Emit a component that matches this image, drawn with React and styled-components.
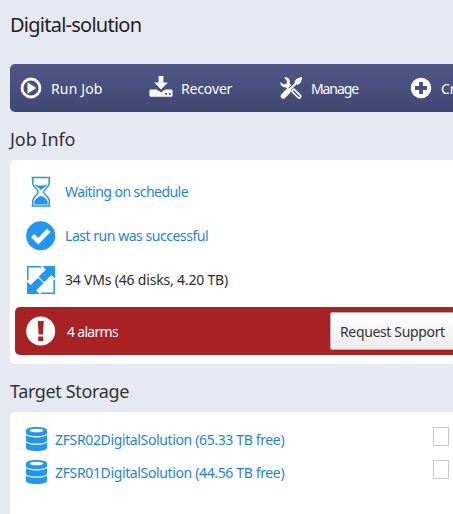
import React from 'react';
import styled, { createGlobalStyle } from 'styled-components';

const GlobalStyle = createGlobalStyle`
  *, *::before, *::after { box-sizing: border-box; }
  html, body { margin: 0; overflow: hidden; background: #e6e9f2; }
  body { font: 14px/20px "Noto Sans", "Open Sans", sans-serif; color: #2b2b2b; }
`;

const Page = styled.main`
  height: 514px;
  padding-left: 10px;
  overflow: hidden;
  display: flex;
  flex-direction: column;
`;

const Text = styled.span`
  letter-spacing: ${(p) => p.$track || 0}px;
  white-space: nowrap;
`;

const Title = styled.h1`
  margin: 0;
  height: 64px;
  padding-top: 10px;
  font-size: 20px;
  line-height: 30px;
  font-weight: 400;
  color: #222;
  flex: none;
`;

const SectionTitle = styled.h2`
  margin: 0;
  height: 48px;
  padding-top: 14px;
  font-size: 18px;
  line-height: 26px;
  font-weight: 400;
  color: #333;
  flex: none;
`;

const Toolbar = styled.nav`
  flex: none;
  height: 48px;
  display: grid;
  grid-template-columns: repeat(4, 130px);
  border-radius: 5px 0 0 5px;
  background: linear-gradient(#505788, #404874);
  color: #fff;
`;

const Tool = styled.a`
  display: grid;
  grid-template-columns: 24px 1fr;
  column-gap: 8px;
  align-items: center;
  padding: 1px 0 0 9px;

  svg { margin-top: -2px; }
`;

const Panel = styled.section`
  flex: none;
  height: ${(p) => p.$height}px;
  padding: ${(p) => p.$padding};
  border-radius: 5px 0 0 5px;
  background: #fff;
`;

const InfoRow = styled.div`
  height: 44px;
  display: grid;
  grid-template-columns: 30px 1fr;
  column-gap: 9px;
  align-items: center;
  padding-left: 11px;
  color: ${(p) => (p.$link ? '#1a84dc' : '#2b2b2b')};
`;

const AlarmBar = styled.div`
  height: 48px;
  margin-top: 5px;
  display: grid;
  grid-template-columns: 30px 252px 130px;
  column-gap: 11px;
  align-items: center;
  padding-left: 11px;
  border-radius: 5px 0 0 5px;
  background: #a82224;
  color: #fff;
`;

const AlarmLabel = styled.div`
  padding-top: 2px;
`;

const SupportButton = styled.button`
  height: 38px;
  padding: 2px 0 0 9px;
  border: 1px solid #b5b5b5;
  border-radius: 2px;
  background: linear-gradient(#fff, #ececec);
  color: #333;
  font: inherit;
  text-align: left;
`;

const StorageRow = styled.div`
  height: 33px;
  display: grid;
  grid-template-columns: 21px 370px 16px;
  column-gap: 8px;
  align-items: start;
  color: #1a84dc;

  svg { display: block; }
`;

const StorageName = styled.a`
  padding-top: 3px;
`;

const Checkbox = styled.span`
  height: 19px;
  border: 1px solid #c8c8c8;
  background: #fff;
`;

const Svg = styled.svg`
  display: block;
  overflow: visible;
`;

const PlayIcon = () => (
  <Svg width="24" height="24" viewBox="0 0 24 24">
    <circle cx="12" cy="12" r="9" fill="none" stroke="#fff" strokeWidth="2.8" />
    <path d="M8.5 6.3 17.300 12l-8.800 5.700z" fill="#fff" />
  </Svg>
);

const RecoverIcon = () => (
  <Svg width="24" height="24" viewBox="0 0 24 24">
    <path fill="#fff" d="M9.6 0h4.8v6.6h4.4L12 13.4 5.2 6.6h4.4z" />
    <path
      fill="#fff"
      fillRule="evenodd"
      d="M1.8 13.5h6l4.2 3 4.2-3h6q1.3 0 1.3 1.3v4.700q0 1.3-1.3 1.3H1.8q-1.3 0-1.3-1.3v-4.700q0-1.3 1.3-1.3zM16.3 17v1.8h1.8V17zm3.6 0v1.8h1.8V17z"
    />
  </Svg>
);

const ToolsIcon = () => (
  <Svg width="24" height="24" viewBox="0 0 24 24">
    <path d="m10 10.5 10.3 10" stroke="#fff" strokeWidth="4.6" strokeLinecap="round" />
    <path d="m14.5 15 5.7 5.5" stroke="#484f7d" strokeWidth="1.4" strokeLinecap="round" />
    <path
      fill="#fff"
      d="M5.3 1.4c3-.6 5.700 1.5 5.5 4.6l-.2 1.5 3 3-3.800 3.700-3-3C3.6 11.7 1 9.2 1.5 6l3.2 2.5 2.8-.8.4-3z"
    />
    <path d="m9.2 14.8 10-10" stroke="#484f7d" strokeWidth="4" />
    <path d="m8.8 15.5 9-9" stroke="#fff" strokeWidth="2.3" />
    <path fill="#fff" d="m15.300 6 2-3 5-1.900 1 1-2 5-3 2z" />
    <path d="m4.2 20.1 5-5" stroke="#fff" strokeWidth="5.200" strokeLinecap="round" />
  </Svg>
);

const PlusIcon = () => (
  <Svg width="24" height="24" viewBox="0 0 24 24">
    <circle cx="12" cy="12" r="10.3" fill="#fff" />
    <path d="M12 6v12M6 12h12" stroke="#484f7d" strokeWidth="3.8" />
  </Svg>
);

const HourglassIcon = () => (
  <Svg width="30" height="32" viewBox="0 0 30 32">
    <path
      d="M5.500 1.500h19M5.500 30h19M6.800 2v5.500c0 3.800 5.500 5.800 5.500 8.500s-5.500 4.700-5.500 8.500V30M23.200 2v5.500c0 3.800-5.500 5.800-5.500 8.500s5.500 4.700 5.500 8.500V30"
      fill="none"
      stroke="#2196f3"
      strokeWidth="1.500"
    />
    <path
      fill="#2196f3"
      d="M8.500 8c3 2 9.500 2 13 0-.8 2.500-5 4-6.500 6.500C13.500 12 9.300 10.500 8.500 8zM8.300 28.500v-3C9.500 22.200 12 21 15 20c3 1 5.500 2.200 6.700 5.500v3z"
    />
  </Svg>
);

const CheckIcon = () => (
  <Svg width="30" height="30" viewBox="0 0 30 30">
    <circle cx="14.700" cy="14.700" r="14.500" fill="#2196f3" />
    <path d="m6.600 14.500 5.600 5.700L22.800 9.400" fill="none" stroke="#fff" strokeWidth="4.600" />
  </Svg>
);

const ExpandIcon = () => (
  <Svg width="30" height="30" viewBox="0 0 30 30">
    <path
      d="M15 1.800H1.800V15M15 28.200h13.200V15"
      fill="none"
      stroke="#2196f3"
      strokeWidth="1.500"
    />
    <path
      fill="#2196f3"
      d="M16.500 1H29v12.500l-3.600-3.600-7.300 7.300-5.500-5.500 7.300-7.300zM13.500 29H1V16.500l3.600 3.600 7.300-7.300 5.500 5.500-7.300 7.300z"
    />
  </Svg>
);

const AlarmIcon = () => (
  <Svg width="30" height="30" viewBox="0 0 30 30">
    <circle cx="14.700" cy="15" r="14.500" fill="#fff" />
    <path fill="#a82224" d="M11.800 5h6l-.8 13.500h-4.400zM12.200 20.500h5V25h-5z" />
  </Svg>
);

const DatabaseIcon = () => (
  <Svg width="21" height="24" viewBox="0 0 21 24">
    <path fill="#2196f3" d="M0 3.300C0 1.200 4.500 0 10.500 0S21 1.200 21 3.300v17.400c0 2-4.500 3.300-10.500 3.300S0 22.700 0 20.700z" />
    <ellipse cx="10.500" cy="3.500" rx="6.800" ry="1.700" fill="#fff" />
    <path
      d="M-.5 6.900c2 2.300 6 2.900 11 2.900s9-.6 11-2.900M-.5 14.300c2 2.300 6 2.900 11 2.900s9-.6 11-2.900"
      fill="none"
      stroke="#fff"
      strokeWidth="1.200"
    />
  </Svg>
);

const tools = [
  { label: 'Run Job', Icon: PlayIcon, track: 0.15 },
  { label: 'Recover', Icon: RecoverIcon, track: -0.15 },
  { label: 'Manage', Icon: ToolsIcon, track: -1.1 },
  { label: 'Create', Icon: PlusIcon, track: -0.1 },
];

const details = [
  { label: 'Waiting on schedule', Icon: HourglassIcon, track: -0.54, link: true },
  { label: 'Last run was successful', Icon: CheckIcon, track: -0.46, link: true },
  { label: '34 VMs (46 disks, 4.20 TB)', Icon: ExpandIcon, track: -0.19 },
];

const storages = ['ZFSR02DigitalSolution (65.33 TB free)', 'ZFSR01DigitalSolution (44.56 TB free)'];

export default function App() {
  return (
    <>
      <GlobalStyle />
      <Page>
        <Title><Text $track={-0.75}>Digital-solution</Text></Title>
        <Toolbar>
          {tools.map(({ label, Icon, track }) => (
            <Tool key={label}>
              <Icon />
              <Text $track={track}>{label}</Text>
            </Tool>
          ))}
        </Toolbar>
        <SectionTitle><Text $track={-0.05}>Job Info</Text></SectionTitle>
        <Panel $height={204} $padding="10px 0 0 5px">
          {details.map(({ label, Icon, track, link }) => (
            <InfoRow key={label} $link={link}>
              <Icon />
              <Text $track={track}>{label}</Text>
            </InfoRow>
          ))}
          <AlarmBar>
            <AlarmIcon />
            <AlarmLabel><Text $track={-0.7}>4 alarms</Text></AlarmLabel>
            <SupportButton><Text $track={-0.35}>Request Support</Text></SupportButton>
          </AlarmBar>
        </Panel>
        <SectionTitle><Text $track={-0.36}>Target Storage</Text></SectionTitle>
        <Panel $height={110} $padding="15px 0 0 16px">
          {storages.map((name) => (
            <StorageRow key={name}>
              <DatabaseIcon />
              <StorageName><Text $track={-0.36}>{name}</Text></StorageName>
              <Checkbox />
            </StorageRow>
          ))}
        </Panel>
      </Page>
    </>
  );
}
